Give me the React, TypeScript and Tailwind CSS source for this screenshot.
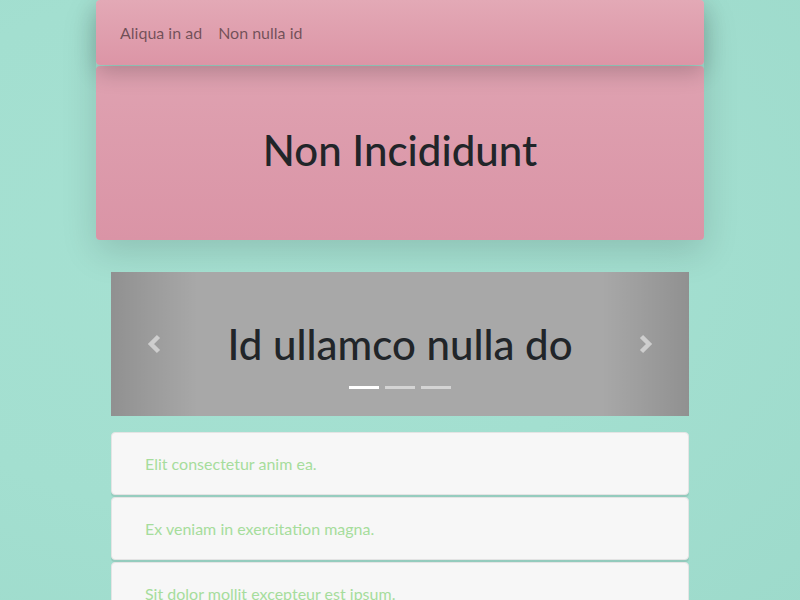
import React from "react";

const font = { fontFamily: '"Lato", "Noto Sans", sans-serif' };

function Chevron({ dir }: { dir: "left" | "right" }) {
  return (
    <svg width="16" height="20" viewBox="0 0 16 20" fill="none">
      {dir === "left" ? (
        <polyline points="12.5,2.5 5,10 12.5,17.5" stroke="rgba(255,255,255,0.5)" strokeWidth="4.5" strokeLinecap="butt" strokeLinejoin="miter" />
      ) : (
        <polyline points="3.5,2.5 11,10 3.5,17.5" stroke="rgba(255,255,255,0.5)" strokeWidth="4.5" strokeLinecap="butt" strokeLinejoin="miter" />
      )}
    </svg>
  );
}

export default function App() {
  const items = [
    "Elit consectetur anim ea.",
    "Ex veniam in exercitation magna.",
    "Sit dolor mollit excepteur est ipsum.",
  ];
  return (
    <div
      className="min-h-screen w-full overflow-hidden bg-[radial-gradient(ellipse_at_30%_40%,#a6e1d2_0%,#a3dfd0_50%,#9ddacb_100%)]"
      style={font}
    >
      <div className="mx-auto w-[608px]">
        <div className="shadow-[0_12px_36px_rgba(0,0,0,0.14)] rounded">
          <nav className="relative z-10 flex h-[65px] items-center rounded px-[16px] bg-gradient-to-b from-[#e3a9b6] to-[#dc95a6] shadow-[0_8px_22px_rgba(0,0,0,0.2)]">
            <a className="px-2 text-[16px] text-[rgba(0,0,0,0.5)]">Aliqua in ad</a>
            <a className="px-2 text-[16px] text-[rgba(0,0,0,0.5)]">Non nulla id</a>
          </nav>
          <div className="mt-px flex h-[174px] items-center justify-center rounded bg-gradient-to-b from-[#dfa2b1] to-[#da94a6] pb-[6px]">
            <h1 className="text-[42px] font-medium leading-[1.2] text-[#212529]">Non Incididunt</h1>
          </div>
        </div>

        <div className="relative mx-[15px] mt-[32px] flex h-[144px] items-center justify-center bg-[#a8a8a8]">
          <div className="absolute left-0 top-0 flex h-full w-[15%] items-center justify-center bg-gradient-to-r from-[rgba(0,0,0,0.14)] to-[rgba(0,0,0,0)]">
            <Chevron dir="left" />
          </div>
          <div className="absolute right-0 top-0 flex h-full w-[15%] items-center justify-center bg-gradient-to-l from-[rgba(0,0,0,0.14)] to-[rgba(0,0,0,0)]">
            <Chevron dir="right" />
          </div>
          <h2 className="text-[42px] font-medium leading-[1.2] text-[#212529]">Id ullamco nulla do</h2>
          <div className="absolute bottom-[27px] left-0 right-0 flex justify-center gap-[6px]">
            <span className="h-[3px] w-[30px] bg-white" />
            <span className="h-[3px] w-[30px] bg-[rgba(255,255,255,0.5)]" />
            <span className="h-[3px] w-[30px] bg-[rgba(255,255,255,0.5)]" />
          </div>
        </div>

        <div className="mx-[15px] mt-4 flex flex-col gap-[2px]">
          {items.map((t) => (
            <div
              key={t}
              className="flex h-[63px] items-center rounded border border-[#e4e4e4] bg-[#f7f7f7] pl-[33px] text-[16px] text-[#a6dd9c] shadow-[0_2px_0_rgba(0,0,0,0.08)]"
            >
              {t}
            </div>
          ))}
        </div>
      </div>
    </div>
  );
}
